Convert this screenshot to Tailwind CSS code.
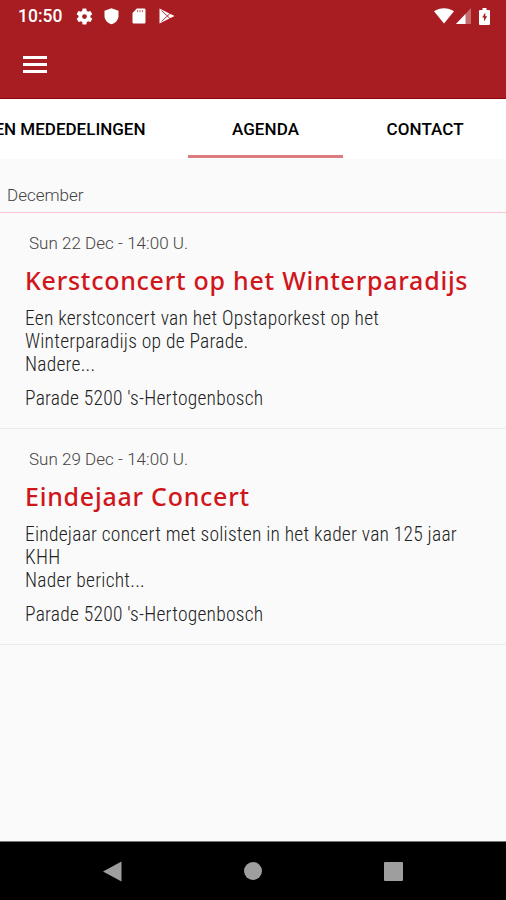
<!DOCTYPE html>
<html lang="nl">
<head>
  <meta charset="UTF-8" />
  <meta name="viewport" content="width=device-width, initial-scale=1.0" />
  <title>Agenda</title>
  <script src="https://cdn.jsdelivr.net/npm/@tailwindcss/browser@4"></script>
</head>
<body class="h-[900px] w-[506px] overflow-hidden flex flex-col bg-[#fafafa] font-[Roboto,sans-serif]">
  <!-- status bar + toolbar -->
  <header class="h-[99px] shrink-0 bg-[#a71d21] border-b border-[#8e0508] text-white">
    <div class="flex h-8 items-center pl-[18px] pr-[16px]">
      <span class="text-[17.5px] leading-8 font-medium w-[57px] whitespace-nowrap">10:50</span>
      <svg class="size-[19px] -ml-[0.5px]" viewBox="0 0 24 24" fill="currentColor"><path d="M19.4 13a7.500 7.500 0 0 0 0-2l2.100-1.600a.5.5 0 0 0 .1-.6l-2-3.500a.5.5 0 0 0-.6-.2l-2.500 1a7.300 7.300 0 0 0-1.700-1l-.4-2.700a.5.5 0 0 0-.5-.4h-4a.5.5 0 0 0-.5.400L9 5.100a7.700 7.700 0 0 0-1.700 1l-2.500-1a.5.5 0 0 0-.6.200l-2 3.500a.5.5 0 0 0 .1.600L4.500 11a8 8 0 0 0 0 2l-2.100 1.600a.5.5 0 0 0-.1.600l2 3.500c.1.200.4.300.6.200l2.500-1c.5.400 1.100.7 1.700 1l.4 2.600c0 .300.200.500.500.500h4c.3 0 .5-.2.500-.4l.4-2.700a7.300 7.300 0 0 0 1.700-1l2.500 1c.2.100.5 0 .6-.2l2-3.500a.5.500 0 0 0-.1-.6L19.400 13zM12 15a3 3 0 1 1 0-6 3 3 0 0 1 0 6z"/></svg>
      <svg class="w-[15px] h-[17px] ml-[10.5px]" viewBox="0 0 15 17" fill="currentColor"><path d="M7.500.3 14.500 2.800v5.200c0 4-3 7-7 8.200C3.500 15 .5 12 .5 8V2.800z"/></svg>
      <svg class="w-[14px] h-[16px] ml-[13px]" viewBox="0 0 14 16"><path fill="#fff" d="M4.800.5h7.400c.7 0 1.300.6 1.300 1.300v12.400c0 .7-.6 1.300-1.300 1.300H1.800c-.7 0-1.300-.6-1.300-1.300V5z"/><path stroke="#a71d21" stroke-width="1" stroke-opacity=".7" d="M5.600 2v2.200M8 2v2.200M10.400 2v2.200"/></svg>
      <svg class="w-[16px] h-[16px] ml-[13px]" viewBox="0 0 16 16"><path fill="#fff" d="M.5.5 15.500 8 .5 15.500z"/><path fill="none" stroke="#a71d21" stroke-width=".9" d="M2.500 2.500 11.500 11M2.500 13.500 11.500 5"/></svg>
      <svg class="w-[20px] h-[16px] ml-auto" viewBox="0 0 20 16" fill="currentColor"><path d="M0 3.200C6-.9 14-.9 20 3.200L10 15.500z"/></svg>
      <svg class="w-[15px] h-[16px] ml-[2px]" viewBox="0 0 15 16" fill="currentColor"><path fill-opacity=".35" d="M15 0v16H0z"/><path d="M9.500 5.900V16H0z"/></svg>
      <svg class="w-[11px] h-[17px] ml-[8px]" viewBox="0 0 11 17"><path fill="#fff" d="M3.500 0h4v2H10a1 1 0 0 1 1 1v13a1 1 0 0 1-1 1H1a1 1 0 0 1-1-1V3a1 1 0 0 1 1-1h2.500z"/><path fill="#a71d21" d="M6.300 4.500 3.200 9.600h1.900V13.500l3-5.200H6.300z"/></svg>
    </div>
    <svg class="w-[24px] h-[17px] ml-[23px] mt-[24px]" viewBox="0 0 24 17" fill="currentColor"><path d="M0 0h24v3H0zM0 7h24v3H0zM0 14h24v3H0z"/></svg>
  </header>

  <!-- tabs -->
  <nav class="flex h-[60px] shrink-0 bg-white text-[17px] font-medium leading-[60px] text-black whitespace-nowrap">
    <div class="w-[188px] shrink-0 flex justify-end pr-[42.5px]"><span>NIEUWS EN MEDEDELINGEN</span></div>
    <div class="w-[155px] shrink-0 h-[59px] border-b-3 border-[#dc7c80] text-center tracking-[0.1px]">AGENDA</div>
    <div class="w-[163px] shrink-0 pl-[43.5px] tracking-[0.1px]">CONTACT</div>
  </nav>

  <main class="flex-1">
    <h2 class="h-[54px] border-b border-[#f8c8d0] pl-[7px] pt-[24px] text-[17px] leading-6 font-light text-[#444]">December</h2>

    <article class="h-[216px] border-b border-[#ececec] pl-[25px] pt-[18px] whitespace-nowrap">
      <div class="pl-1 text-[17px] leading-6 font-light tracking-[0.03px] text-[#444]">Sun 22 Dec - 14:00 U.</div>
      <h3 class="mt-[8px] text-[25px] leading-[34px] font-medium tracking-[0.74px] text-[#d0161b] font-['Noto_Sans',sans-serif]">Kerstconcert op het Winterparadijs</h3>
      <p class="mt-[10px] text-[19.5px] leading-[23px] font-light tracking-[0.23px] text-[#222] font-stretch-75% font-['Roboto_Condensed',Roboto,sans-serif]">Een kerstconcert van het Opstaporkest op het<br />Winterparadijs op de Parade.<br />Nadere...</p>
      <p class="mt-[11px] text-[19.5px] leading-[23px] font-light tracking-[0.23px] text-[#222] font-stretch-75% font-['Roboto_Condensed',Roboto,sans-serif]">Parade 5200 's-Hertogenbosch</p>
    </article>

    <article class="h-[216px] border-b border-[#ececec] pl-[25px] pt-[18px] whitespace-nowrap">
      <div class="pl-1 text-[17px] leading-6 font-light tracking-[0.03px] text-[#444]">Sun 29 Dec - 14:00 U.</div>
      <h3 class="mt-[8px] text-[25px] leading-[34px] font-medium tracking-[0.74px] text-[#d0161b] font-['Noto_Sans',sans-serif]">Eindejaar Concert</h3>
      <p class="mt-[10px] text-[19.5px] leading-[23px] font-light tracking-[0.23px] text-[#222] font-stretch-75% font-['Roboto_Condensed',Roboto,sans-serif]">Eindejaar concert met solisten in het kader van 125 jaar<br />KHH<br />Nader bericht...</p>
      <p class="mt-[11px] text-[19.5px] leading-[23px] font-light tracking-[0.23px] text-[#222] font-stretch-75% font-['Roboto_Condensed',Roboto,sans-serif]">Parade 5200 's-Hertogenbosch</p>
    </article>
  </main>

  <!-- android navigation -->
  <footer class="flex h-[59px] shrink-0 items-center bg-black border-t border-[#777] pl-[103px] pr-[103px] justify-between">
    <svg class="w-[19px] h-[21px]" viewBox="0 0 19 21"><path fill="#9e9e9e" d="M18.500.5v20L0 10.500z"/></svg>
    <div class="size-[18px] rounded-full bg-[#9e9e9e]"></div>
    <div class="size-[19px] rounded-[1px] bg-[#9e9e9e]"></div>
  </footer>
</body>
</html>
